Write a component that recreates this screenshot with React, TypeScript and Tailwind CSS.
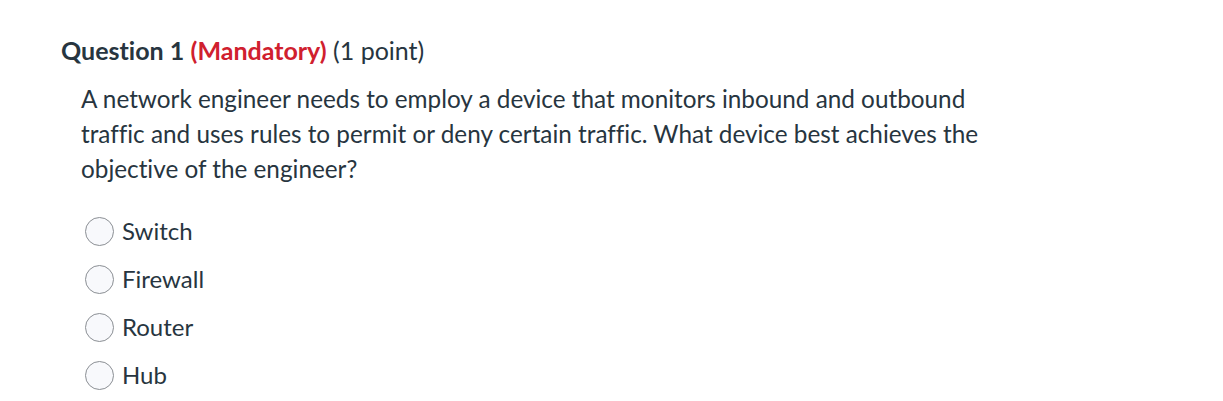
export default function App() {
  const options = ["Switch", "Firewall", "Router", "Hub"];
  return (
    <div className="h-[401px] w-[1223px] bg-white font-['Lato',sans-serif] text-[#273540] [font-variant-ligatures:none]">
      <div className="pl-[61px] pt-[35px]">
        <h2 className="text-[25px] leading-[30px]">
          <span className="font-bold">Question 1</span>{" "}
          <span className="font-bold text-[#d0202e]">(Mandatory)</span> <span>(1 point)</span>
        </h2>
        <div className="pl-5 pt-4">
          <p className="w-[915px] text-[24.3px] leading-[35px]">
            A network engineer needs to employ a device that monitors inbound and outbound traffic and uses rules to
            permit or deny certain traffic. What device best achieves the objective of the engineer?
          </p>
          <div className="mt-[21px] flex flex-col">
            {options.map((o) => (
              <label key={o} className="flex h-12 items-center gap-2">
                <span className="ml-1 h-[29px] w-[29px] rounded-full border border-[#8b8f94] bg-[#f8f9fc]" />
                <span className="text-[24px] leading-6">{o}</span>
              </label>
            ))}
          </div>
        </div>
      </div>
    </div>
  );
}
